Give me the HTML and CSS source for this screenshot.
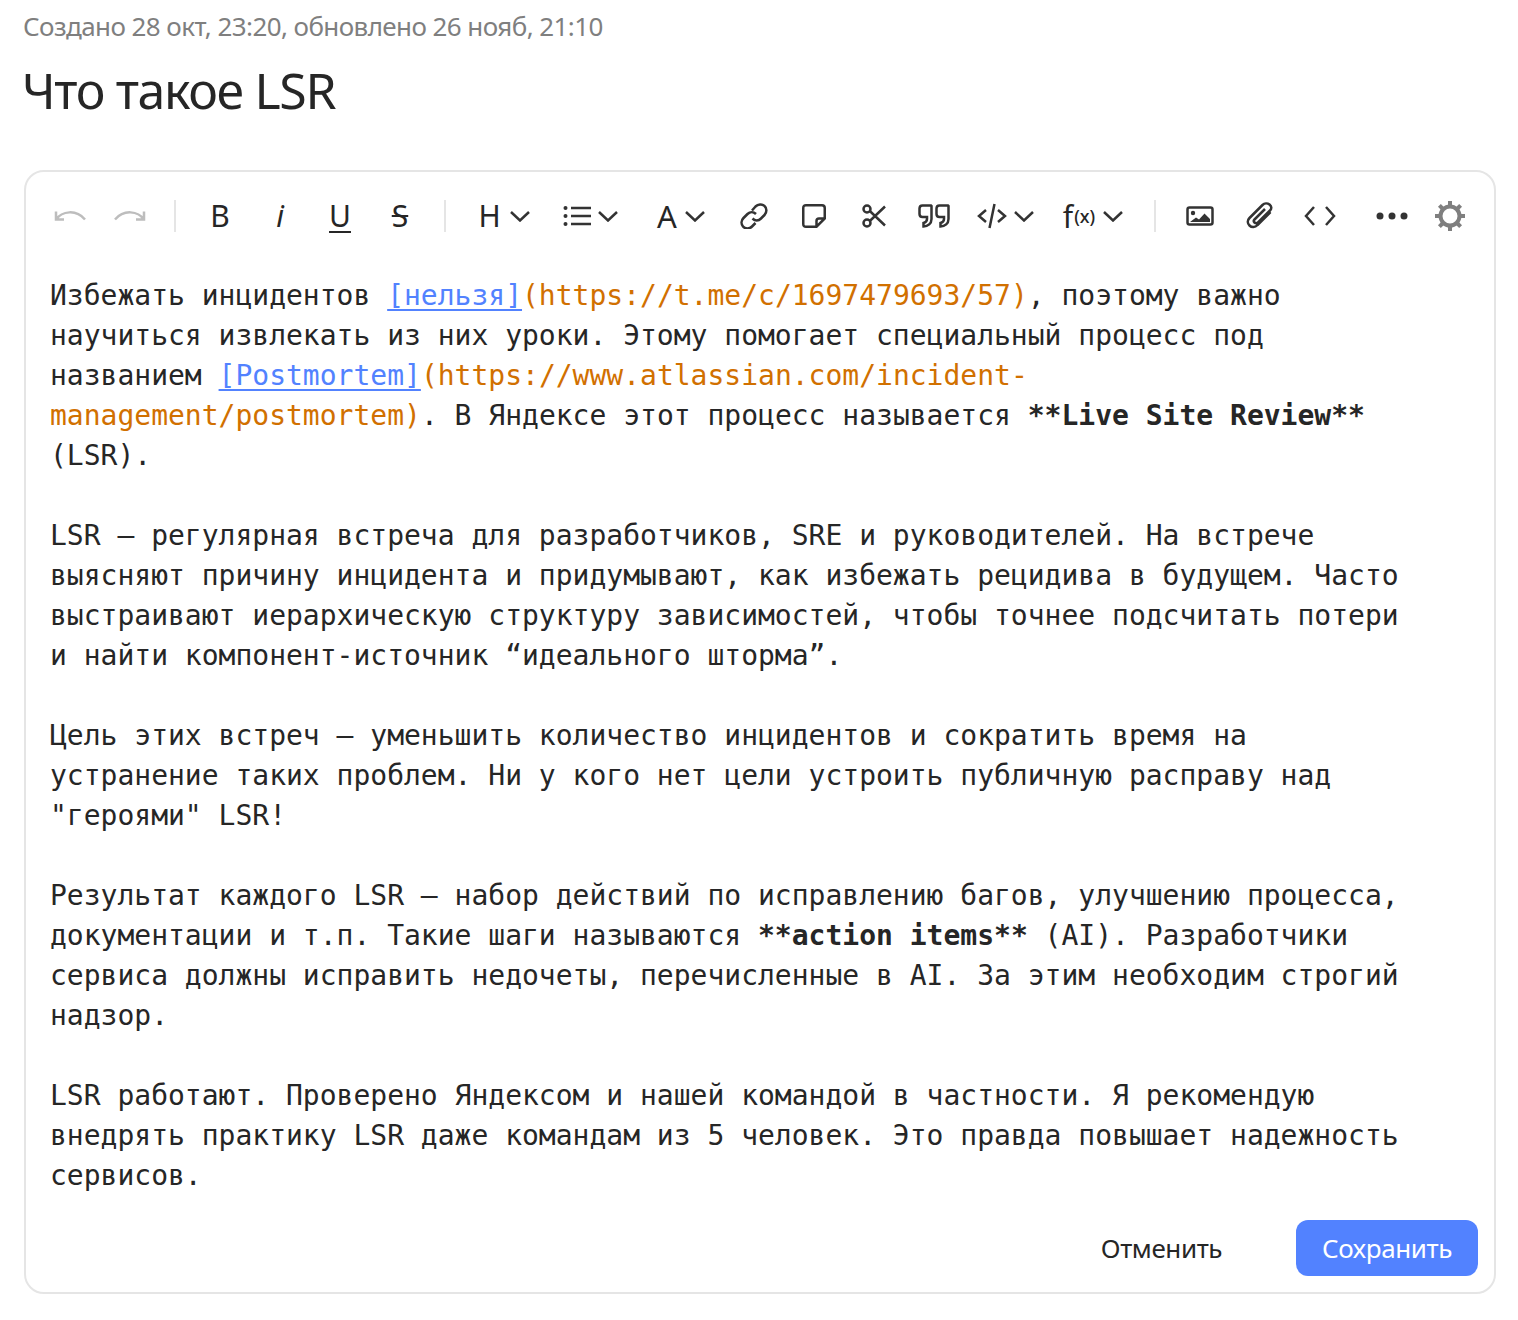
FILE: index.html
```html
<!DOCTYPE html>
<html lang="ru">
<head>
<meta charset="utf-8">
<title>Что такое LSR</title>
<link rel="stylesheet" href="styles.css">
</head>
<body>
<main class="page">
  <div class="meta">Создано 28 окт, 23:20, обновлено 26 нояб, 21:10</div>
  <h1 class="title">Что такое LSR</h1>
  <section class="card">
    <div class="toolbar">
      <button class="tool muted"><svg width="32" height="20" viewBox="0 0 32 20"><path d="M2 13.500C8 5 22 3 31 13.500M2 5.500V13.500H10"/></svg></button>
      <button class="tool muted"><svg width="32" height="20" viewBox="0 0 32 20"><path d="M30 13.500C24 5 10 3 1 13.500M30 5.500V13.500H22"/></svg></button>
      <span class="sep"></span>
      <button class="tool glyph">B</button>
      <button class="tool glyph italic">i</button>
      <button class="tool glyph under">U</button>
      <button class="tool glyph strike">S</button>
      <span class="sep"></span>
      <button class="tool wide glyph heading">H<svg class="chev" width="20" height="12" viewBox="0 0 20 12"><path d="M1 2L10 10.500L19 2"/></svg></button>
      <button class="tool wide list"><svg width="28" height="22" viewBox="0 0 28 22"><path d="M8 3H28M8 11H28M8 19H28"/><circle class="fill" cx="2.500" cy="3" r="2"/><circle class="fill" cx="2.500" cy="11" r="2"/><circle class="fill" cx="2.500" cy="19" r="2"/></svg><svg class="chev" width="20" height="12" viewBox="0 0 20 12"><path d="M1 2L10 10.500L19 2"/></svg></button>
      <button class="tool wide glyph letter">A<svg class="chev" width="20" height="12" viewBox="0 0 20 12"><path d="M1 2L10 10.500L19 2"/></svg></button>
      <button class="tool"><svg width="28" height="26" viewBox="0 0 28 26"><path d="M12 7.500L15.500 3.500C18 1 22 1 24.500 3S27 9.500 24.500 12L21 15.500C18.500 18 15 18 12.500 15.500"/><path d="M16 11C13.500 8.500 10 8.500 7.500 11L3.500 15C1 17.500 1 21 3 23.500S9.500 26 12 23.500L15.500 20"/></svg></button>
      <button class="tool"><svg width="24" height="24" viewBox="0 0 24 24"><path d="M14.500 22.750H4C2.200 22.750 1.250 21.800 1.250 20V4C1.250 2.200 2.200 1.250 4 1.250H20C21.800 1.250 22.750 2.200 22.750 4V14.500L14.500 22.750ZM14.500 22.500V17C14.500 15.500 15.500 14.500 17 14.500H22.500"/></svg></button>
      <button class="tool"><svg width="24" height="24" viewBox="0 0 24 24"><circle cx="5" cy="5" r="3.500"/><circle cx="5" cy="19" r="3.500"/><path d="M7.800 7L23 21.500M7.800 17L23 2.500"/></svg></button>
      <button class="tool"><svg width="32" height="24" viewBox="0 0 32 24"><path d="M13 1.500H4.500C2.500 1.500 1.500 2.500 1.500 4.500V10C1.500 12 2.500 13 4.500 13H9V15C9 17.500 7.500 18.500 5.500 19V22.500C10 22.500 13.500 19.500 13.500 15V2ZM30 1.500H21.500C19.500 1.500 18.500 2.500 18.500 4.500V10C18.500 12 19.500 13 21.500 13H26V15C26 17.500 24.500 18.500 22.500 19V22.500C27 22.500 30.500 19.500 30.500 15V2Z"/></svg></button>
      <button class="tool wide code"><svg width="30" height="26" viewBox="0 0 30 26"><path d="M9 7L2 13L9 19M21 7L28 13L21 19M17.500 1L12.500 25"/></svg><svg class="chev" width="20" height="12" viewBox="0 0 20 12"><path d="M1 2L10 10.500L19 2"/></svg></button>
      <button class="tool wide fx"><span class="fx-f">f</span><span class="fx-x">(x)</span><svg class="chev" width="20" height="12" viewBox="0 0 20 12"><path d="M1 2L10 10.500L19 2"/></svg></button>
      <span class="sep"></span>
      <button class="tool"><svg width="28" height="20" viewBox="0 0 28 20"><rect x="1.500" y="1.500" width="25" height="17" rx="2"/><circle class="fill" cx="7" cy="7" r="2.200"/><path class="fill" d="M4 16L10 11.500L13 13.500L18.500 7.500L24 13V16Z"/></svg></button>
      <button class="tool"><svg width="28" height="28" viewBox="0 0 28 28"><path d="M24.500 10L11.500 23C9 25.800 5.500 25.500 3.500 23.500S1 18.500 3.500 16L16.500 3C18.500 1 21.500 1 23.500 2.500S26 6.500 24 8.500L12 20.500C11 21.500 9.500 21.500 8.500 20.500S7.500 18.500 8.500 17.500L19 7"/></svg></button>
      <button class="tool"><svg width="32" height="22" viewBox="0 0 32 22"><path d="M10 2L2 11L10 20M22 2L30 11L22 20"/></svg></button>
      <button class="tool dots"><svg width="34" height="10" viewBox="0 0 34 10"><circle class="fill" cx="5" cy="5" r="3.500"/><circle class="fill" cx="17" cy="5" r="3.500"/><circle class="fill" cx="29" cy="5" r="3.500"/></svg></button>
      <button class="tool gear"><svg width="32" height="32" viewBox="0 0 32 32"><circle cx="16" cy="16" r="9.500"/><path d="M16 1V6M16 26V31M1 16H6M26 16H31M5.400 5.400L9 9M23 23L26.600 26.600M5.400 26.600L9 23M23 9L26.600 5.400"/></svg></button>
    </div>
    <div class="editor"><span>Избежать инцидентов </span><a class="link">[нельзя]</a><span class="url">(https://t.me/c/1697479693/57)</span><span>, поэтому важно научиться извлекать из них уроки. Этому помогает специальный процесс под названием </span><a class="link">[Postmortem]</a><span class="url">(https://www.atlassian.com/incident-management/postmortem)</span><span>. В Яндексе этот процесс называется </span><b>**Live Site Review**</b><span> (LSR).

LSR — регулярная встреча для разработчиков, SRE и руководителей. На встрече выясняют причину инцидента и придумывают, как избежать рецидива в будущем. Часто выстраивают иерархическую структуру зависимостей, чтобы точнее подсчитать потери и найти компонент-источник “идеального шторма”.

Цель этих встреч — уменьшить количество инцидентов и сократить время на устранение таких проблем. Ни у кого нет цели устроить публичную расправу над "героями" LSR!

Результат каждого LSR — набор действий по исправлению багов, улучшению процесса, документации и т.п. Такие шаги называются </span><b>**action items**</b><span> (AI). Разработчики сервиса должны исправить недочеты, перечисленные в AI. За этим необходим строгий надзор.

LSR работают. Проверено Яндексом и нашей командой в частности. Я рекомендую внедрять практику LSR даже командам из 5 человек. Это правда повышает надежность сервисов.</span></div>
    <div class="actions">
      <button class="btn">Отменить</button>
      <button class="btn primary">Сохранить</button>
    </div>
  </section>
</main>
</body>
</html>
```
FILE: styles.css
```css
* { box-sizing: border-box; }
html, body { margin: 0; background: #fff; }
body { font-family: "Noto Sans", "Open Sans", sans-serif; color: #262626; }
.page { padding: 0 22px 0 24px; }
.meta { font-size: 26px; line-height: 32px; padding-top: 10px; margin-left: -1px; color: #7f7f7f; letter-spacing: -0.58px; }
.title { margin: 0 0 0 -2px; padding-top: 17px; font-size: 50px; line-height: 62px; font-weight: 400; letter-spacing: -1.35px; color: #262626; height: 128px; }
.card { border: 2px solid #e5e5e5; border-radius: 20px; height: 1124px; padding: 0 16px 16px 14px; display: flex; flex-direction: column; }
.toolbar { display: flex; align-items: center; height: 88px; }
.tool { width: 60px; height: 44px; padding: 0; border: 0; background: none; display: flex; align-items: center; justify-content: center; gap: 11px; color: #262626; font-family: "Noto Sans", sans-serif; flex: none; }
.tool svg { fill: none; stroke: #333; stroke-width: 2.500; }
.tool svg .fill { fill: #333; stroke: none; }
.tool.muted svg { stroke: #bdbdbd; }
.tool.wide { width: 80px; margin-right: 10px; }
.tool.heading { padding-left: 8px; gap: 9px; }
.tool.list { gap: 7px; }
.tool.letter { margin-right: 4px; font-size: 31px; padding-left: 2px; gap: 8px; }
.tool.code { margin-right: 8px; gap: 7px; padding-left: 3px; }
.glyph { font-size: 30px; line-height: 44px; }
.italic { font-style: italic; }
.under { text-decoration: underline; text-underline-offset: 4px; text-decoration-thickness: 2px; }
.strike { text-decoration: line-through; text-decoration-thickness: 2px; }
.chev { stroke-width: 3; flex: none; }
.sep { width: 2px; height: 32px; background: #e5e5e5; margin: 0 14px; flex: none; }
.tool.fx { gap: 0; margin-right: 8px; padding-left: 2px; }
.fx-f { font-size: 30px; }
.fx-x { font-size: 18px; margin: 0 8px 0 1px; font-weight: 500; }
.dots { margin-left: 12px; }
.gear { margin-left: -2px; }
.gear svg { stroke: #7f7f7f; stroke-width: 4; }
.editor { margin: 16px 0 0 10px; width: 1362px; font-family: "DejaVu Sans Mono", monospace; font-size: 28px; line-height: 40px; white-space: pre-wrap; color: #262626; flex: 1; }
.link { color: #5282ff; text-decoration: underline; text-underline-offset: 4px; text-decoration-thickness: 2px; }
.url { color: #d17000; }
.editor b { font-weight: 700; }
.actions { display: flex; justify-content: flex-end; gap: 48px; }
.btn { height: 56px; padding: 0 26px; border: 0; border-radius: 12px; background: none; font-family: "Noto Sans", sans-serif; font-size: 26px; color: #262626; letter-spacing: -0.4px; }
.primary { background: #5282ff; color: #fff; }
```
